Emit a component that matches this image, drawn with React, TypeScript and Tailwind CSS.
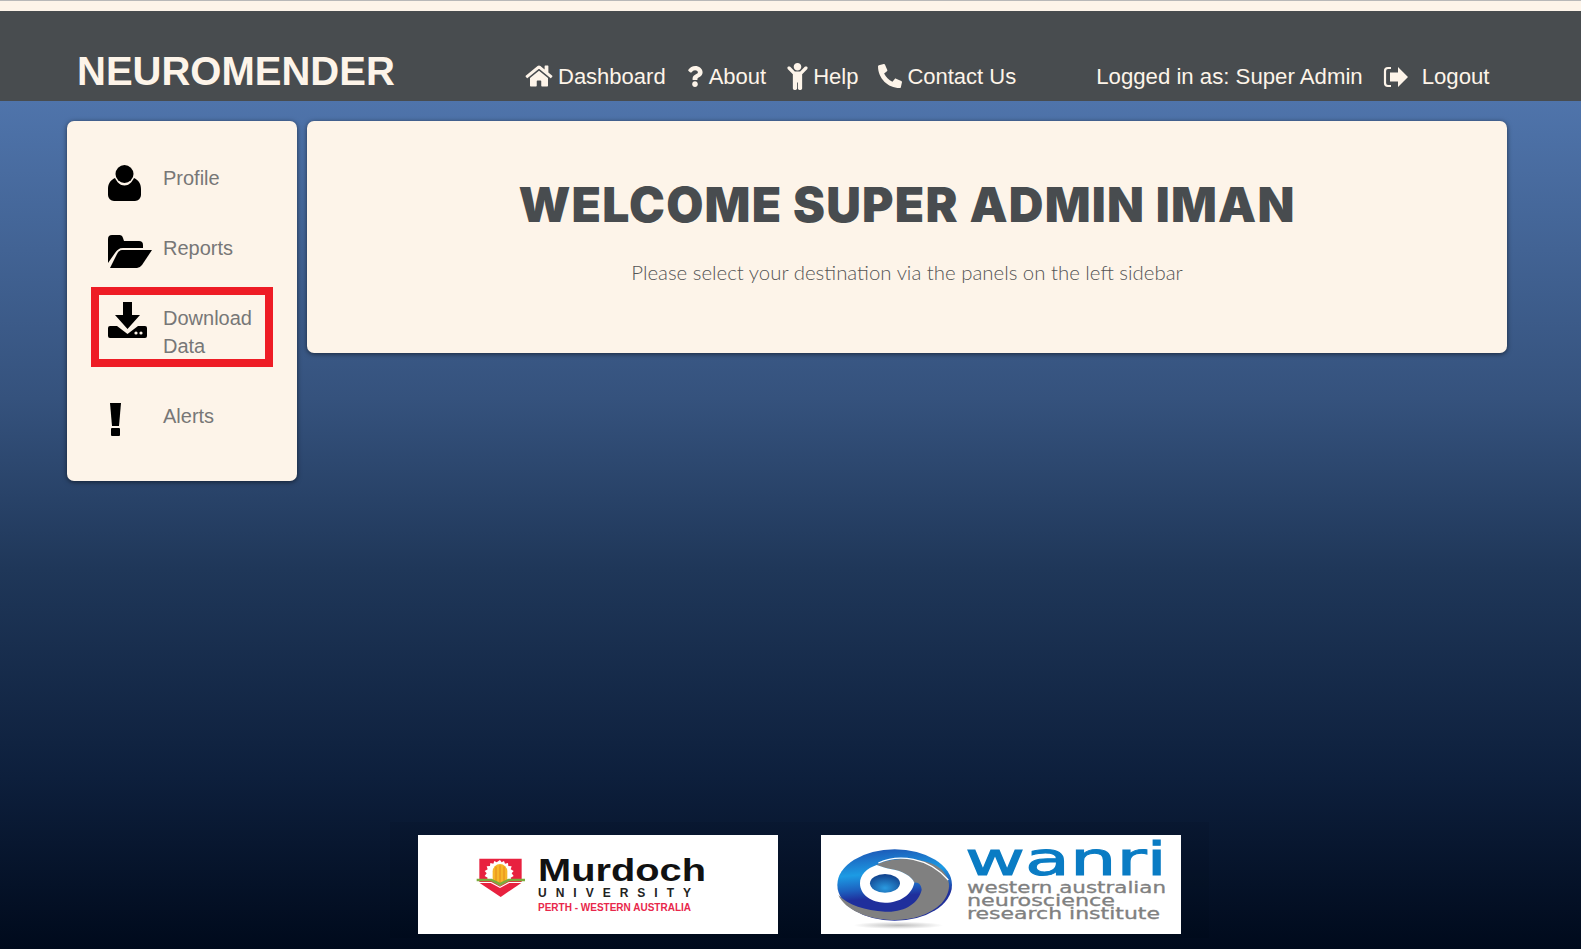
import { FaHome, FaQuestion, FaChild, FaPhone } from 'react-icons/fa'

function UserIcon() {
  return (
    <svg viewBox="0 0 33 36" className="w-[33px] h-[36px]" fill="#000">
      <circle cx="16.5" cy="9" r="9" />
      <path d="M0 30v-6c0-6 3-9 7-11 2 4 5 7.500 9.500 7.500s7.500-3.500 9.500-7.500c4 2 7 5 7 11v6a6 6 0 0 1-6 6H6a6 6 0 0 1-6-6z" />
    </svg>
  )
}

function FolderIcon() {
  return (
    <svg viewBox="0 0 44 33" className="w-[44px] h-[33px]" fill="#000">
      <path d="M0 4a4 4 0 0 1 4-4h7a4 4 0 0 1 4 3l1 3h15a4 4 0 0 1 4 4v3H15c-4 0-6 2-8 5L0 28z" />
      <path d="M14 15h30L34 30a7 7 0 0 1-5 3H2l7-14c1-2 3-4 5-4z" />
    </svg>
  )
}

function DownloadIcon() {
  return (
    <svg viewBox="0 0 39 36" className="w-[39px] h-[36px]" fill="#000">
      <path d="M15 0h9v13h8L19.500 27 7 13h8z" />
      <path d="M2 24h7l10.500 8 10.500-8h7a2 2 0 0 1 2 2v8a2 2 0 0 1-2 2H2a2 2 0 0 1-2-2v-8a2 2 0 0 1 2-2z" />
      <circle cx="28" cy="31" r="1.600" fill="#fdf4e9" />
      <circle cx="33" cy="31" r="1.600" fill="#fdf4e9" />
    </svg>
  )
}

function AlertIcon() {
  return (
    <svg viewBox="0 0 11 33" className="w-[11px] h-[33px]" fill="#000">
      <path d="M0 0h11L9 23H2z" />
      <rect x="1" y="25" width="9" height="8" rx="1" />
    </svg>
  )
}

function LogoutIcon() {
  return (
    <svg viewBox="0 0 26 22" className="w-[26px] h-[22px]">
      <path d="M8 2H5a3 3 0 0 0-3 3v12a3 3 0 0 0 3 3h3" fill="none" stroke="#fdf4e9" strokeWidth="2.200" />
      <path d="M7 6.500h8V1l10 10-10 10v-5.500H7z" fill="#fdf4e9" />
    </svg>
  )
}

function MurdochLogo() {
  return (
    <svg viewBox="0 0 360 99" className="w-[360px] h-[99px] bg-white">
      <g transform="translate(52 15) scale(0.3333)">
        <path d="M28 26h127v72l-63 43-64-43z" fill="#e8213f" />
        <path d="M90 30l5 7 7-4 3 8 9-2 1 9 10 1-3 9 9 5-6 7 6 8-9 5 3 9H50l3-9-9-5 6-8-6-7 9-5-3-9 10-1 1-9 9 2 3-8 7 4z" fill="#fff" />
        <path d="M68 64a22 22 0 0 1 44 0v30l-22 14-22-14z" fill="#f6b628" />
        <path d="M78 50v48M90 46v56M102 50v48" stroke="#e58a1a" strokeWidth="3" />
        <path d="M20 86h45l25 12 25-12h50v8h-48l-27 14-27-14H20z" fill="#7cab3c" />
        <path d="M26 96h38l26 14 26-14h40v3h-38l-28 15-28-15H26z" fill="#fff" />
      </g>
      <text x="120" y="46" fontFamily="Liberation Sans, sans-serif" fontWeight="700" fontSize="32" textLength="168" lengthAdjust="spacingAndGlyphs" fill="#111">
        Murdoch
      </text>
      <text x="120" y="62" fontFamily="Liberation Sans, sans-serif" fontWeight="700" fontSize="12" textLength="153" fill="#222">
        UNIVERSITY
      </text>
      <text x="120" y="76" fontFamily="Liberation Sans, sans-serif" fontWeight="700" fontSize="10" textLength="153" lengthAdjust="spacingAndGlyphs" fill="#e8274b">
        PERTH - WESTERN AUSTRALIA
      </text>
    </svg>
  )
}

function WanriLogo() {
  return (
    <svg viewBox="0 0 360 99" className="w-[360px] h-[99px] bg-white">
      <defs>
        <linearGradient id="swirl" x1="0" y1="0" x2="0.15" y2="1">
          <stop offset="0" stopColor="#1d4fb0" />
          <stop offset="0.38" stopColor="#1c9be4" />
          <stop offset="0.58" stopColor="#1d62c0" />
          <stop offset="0.72" stopColor="#1f2f9c" />
        </linearGradient>
        <radialGradient id="eye" cx="0.5" cy="0.75" r="0.7">
          <stop offset="0" stopColor="#2a9ae0" />
          <stop offset="1" stopColor="#12448f" />
        </radialGradient>
        <radialGradient id="floor">
          <stop offset="0" stopColor="#bdbdbd" />
          <stop offset="1" stopColor="#ffffff" />
        </radialGradient>
      </defs>
      <g transform="translate(4 5) scale(0.3333)">
        <ellipse cx="220" cy="256" rx="135" ry="11" fill="url(#floor)" />
        <ellipse cx="209" cy="135" rx="172" ry="107" fill="url(#swirl)" />
        <path d="M155 75C200 50 300 50 345 85c30 25 40 65 5 105-40 40-100 52-150 50-70-2-140-30-160-75 30 30 80 47 140 50 60 3 100-25 110-65 0-15-10-25-22-22-6-18-38-36-68-40-15-3-30-8-45-13z" fill="#808080" />
        <path d="M155 75c-30 10-50 30-50 55 0 35 35 58 75 58 45 0 80-23 88-60-6-18-38-36-68-40-15-3-30-8-45-13z" fill="#fff" />
        <path d="M160 69c60-28 150-18 210 51" fill="none" stroke="#fff" strokeWidth="4" />
        <ellipse cx="180" cy="130" rx="45" ry="28" fill="url(#eye)" />
      </g>
      <text x="144" y="40" fontFamily="DejaVu Sans, sans-serif" fontSize="47" textLength="202" lengthAdjust="spacingAndGlyphs" fill="#0a7cc4" stroke="#0a7cc4" strokeWidth="1">
        wanri
      </text>
      <text x="146" y="58" fontFamily="DejaVu Sans, sans-serif" fontSize="15" textLength="199" lengthAdjust="spacingAndGlyphs" fill="#808080" stroke="#808080" strokeWidth="0.3">
        western australian
      </text>
      <text x="146" y="71" fontFamily="DejaVu Sans, sans-serif" fontSize="15" textLength="148" lengthAdjust="spacingAndGlyphs" fill="#808080" stroke="#808080" strokeWidth="0.3">
        neuroscience
      </text>
      <text x="146" y="84" fontFamily="DejaVu Sans, sans-serif" fontSize="15" textLength="193" lengthAdjust="spacingAndGlyphs" fill="#808080" stroke="#808080" strokeWidth="0.3">
        research institute
      </text>
    </svg>
  )
}

export default function App() {
  return (
    <div className="h-[949px] overflow-hidden flex flex-col font-['Liberation_Sans',Arial,sans-serif] bg-[linear-gradient(180deg,#5279b2_0%,#4f74ab_10.6%,#35527d_42%,#1f3759_60%,#0d1f3c_82%,#000a1c_100%)]">
      <div className="h-[11px] bg-[#fdf4e9] border-t border-[#b8b8b8]" />

      <header className="h-[90px] bg-[#484c4f] text-[#fdf4e9] flex items-start pl-[77px]">
        <h1 className="w-[448px] mt-[37px] text-[40px] leading-[46px] font-bold">NEUROMENDER</h1>
        <nav className="flex items-center h-[30px] mt-[50px] text-[22px]">
          <a className="flex items-center">
            <FaHome className="w-[28px] h-[24px] mr-[5px]" />
            Dashboard
          </a>
          <a className="flex items-center ml-[21px]">
            <FaQuestion className="w-[16px] h-[21px] mr-[6px]" />
            About
          </a>
          <a className="flex items-center ml-[21px]">
            <FaChild className="w-[21px] h-[27px] mr-[5px]" />
            Help
          </a>
          <a className="flex items-center ml-[20px]">
            <FaPhone className="w-[24px] h-[24px] mr-[5px] -scale-x-100" />
            Contact Us
          </a>
        </nav>
        <div className="flex items-center h-[30px] mt-[51px] ml-[80px] text-[22.2px]">
          <span>Logged in as: Super Admin</span>
          <span className="ml-[20px]">
            <LogoutIcon />
          </span>
          <a className="ml-[13px]">Logout</a>
        </div>
      </header>

      <main className="flex items-start gap-[10px] pl-[67px] pt-[20px]">
        <aside className="w-[230px] h-[360px] pt-[26px] rounded-[7px] bg-[#fdf4e9] shadow-[0_1px_5px_rgba(0,0,0,0.55)] text-[20px] leading-[28px] text-[#777]">
          <div className="flex h-[70px] mx-[24px] pl-[17px] pt-[17px]">
            <div className="w-[55px] shrink-0 pt-[1px]">
              <UserIcon />
            </div>
            <span>Profile</span>
          </div>
          <div className="flex h-[70px] mx-[24px] pl-[17px] pt-[17px]">
            <div className="w-[55px] shrink-0 pt-[1px]">
              <FolderIcon />
            </div>
            <span>Reports</span>
          </div>
          <div className="flex h-[80px] mx-[24px] pl-[9px] pt-[9px] border-8 border-[#ee1c25]">
            <div className="w-[55px] shrink-0 -mt-[2px]">
              <DownloadIcon />
            </div>
            <span className="w-[100px]">Download Data</span>
          </div>
          <div className="flex h-[70px] mt-[18px] mx-[24px] pl-[19px] pt-[17px]">
            <div className="w-[53px] shrink-0 pt-[1px]">
              <AlertIcon />
            </div>
            <span>Alerts</span>
          </div>
        </aside>

        <section className="w-[1200px] h-[232px] rounded-[7px] bg-[#fdf4e9] shadow-[0_1px_5px_rgba(0,0,0,0.55)] text-center pt-[54px]">
          <h2 className="font-['Inter',sans-serif] font-black text-[48px] leading-[60px] tracking-[1.2px] text-[#484c4f]">
            WELCOME SUPER ADMIN IMAN
          </h2>
          <p className="mt-[23px] font-['Lato',sans-serif] font-light text-[20.4px] leading-[28px] text-[#555]">
            Please select your destination via the panels on the left sidebar
          </p>
        </section>
      </main>

      <footer className="mt-auto flex justify-center pb-[11px] pl-[18px]">
        <div className="flex gap-[43px] px-[28px] pt-[13px] pb-[4px] bg-black/5">
          <MurdochLogo />
          <WanriLogo />
        </div>
      </footer>
    </div>
  )
}
